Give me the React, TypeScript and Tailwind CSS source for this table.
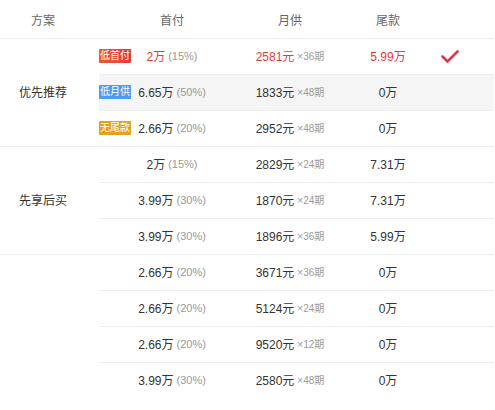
import { ReactNode } from 'react'

type Row = {
  tag?: { label: string; className: string }
  down: string
  pct: string
  monthly: string
  terms: string
  tail: string
  red?: boolean
  gray?: boolean
  checked?: boolean
}

type Group = { name: string; rows: Row[] }

const groups: Group[] = [
  {
    name: '优先推荐',
    rows: [
      {
        tag: { label: '低首付', className: 'bg-gradient-to-r from-[#ee5a2f] to-[#e23a3c]' },
        down: '2万',
        pct: '(15%)',
        monthly: '2581元',
        terms: '×36期',
        tail: '5.99万',
        red: true,
        checked: true,
      },
      {
        tag: { label: '低月供', className: 'bg-[#4a9df0]' },
        down: '6.65万',
        pct: '(50%)',
        monthly: '1833元',
        terms: '×48期',
        tail: '0万',
        gray: true,
      },
      {
        tag: { label: '无尾款', className: 'bg-[#e7a117]' },
        down: '2.66万',
        pct: '(20%)',
        monthly: '2952元',
        terms: '×48期',
        tail: '0万',
      },
    ],
  },
  {
    name: '先享后买',
    rows: [
      { down: '2万', pct: '(15%)', monthly: '2829元', terms: '×24期', tail: '7.31万' },
      { down: '3.99万', pct: '(30%)', monthly: '1870元', terms: '×24期', tail: '7.31万' },
      { down: '3.99万', pct: '(30%)', monthly: '1896元', terms: '×36期', tail: '5.99万' },
    ],
  },
  {
    name: '',
    rows: [
      { down: '2.66万', pct: '(20%)', monthly: '3671元', terms: '×36期', tail: '0万' },
      { down: '2.66万', pct: '(20%)', monthly: '5124元', terms: '×24期', tail: '0万' },
      { down: '2.66万', pct: '(20%)', monthly: '9520元', terms: '×12期', tail: '0万' },
      { down: '3.99万', pct: '(30%)', monthly: '2580元', terms: '×48期', tail: '0万' },
    ],
  },
]

function Cell({ w, children }: { w: string; children?: ReactNode }) {
  return <div className={`${w} flex items-center justify-center whitespace-nowrap`}>{children}</div>
}

function Check() {
  return (
    <svg width="18" height="14" viewBox="0 0 18 14" fill="none">
      <path d="M1.5 6.5 L6.5 11.5 L16.5 1.5" stroke="#e3344a" strokeWidth="2.6" strokeLinecap="round" strokeLinejoin="round" />
    </svg>
  )
}

export default function App() {
  return (
    <div
      className="w-[494px] bg-white text-[12px] text-[#333] leading-none"
      style={{ fontFamily: '"Liberation Sans", Arial, "Noto Sans CJK SC", sans-serif' }}
    >
      {/* Header */}
      <div className="h-[39px] flex border-b border-[#eeeeee] text-[#666]">
        <div className="w-[99px] pr-[13px] flex items-center justify-center pt-[3px]">方案</div>
        <Cell w="w-[146px] pt-[3px]">首付</Cell>
        <Cell w="w-[90px] pt-[3px]">月供</Cell>
        <Cell w="w-[106px] pt-[3px]">尾款</Cell>
        <div className="flex-1" />
      </div>

      {groups.map((g, gi) => (
        <div key={gi} className={`flex ${gi < groups.length - 1 ? 'border-b border-[#eeeeee]' : ''}`}>
          <div className="w-[99px] pr-[13px] flex items-center justify-center">{g.name}</div>
          <div className="flex-1 flex flex-col">
            {g.rows.map((r, ri) => {
              const last = ri === g.rows.length - 1
              return (
                <div
                  key={ri}
                  className={`relative flex ${last ? 'h-[35px]' : 'h-[36px] border-b border-[#eeeeee]'} ${r.gray ? 'bg-[#f5f5f5]' : ''}`}
                >
                  {r.tag && (
                    <span
                      className={`absolute left-0 top-[10px] h-[14px] w-[32px] flex items-center justify-center whitespace-nowrap text-[10px] text-white rounded-[1px] ${r.tag.className}`}
                    >
                      {r.tag.label}
                    </span>
                  )}
                  <Cell w="w-[146px]">
                    <span className={r.red ? 'text-[#e4393c]' : ''}>{r.down}</span>
                    <span className="ml-[3px] text-[11px] text-[#999]">{r.pct}</span>
                  </Cell>
                  <Cell w="w-[90px]">
                    <span className={r.red ? 'text-[#e4393c]' : ''}>{r.monthly}</span>
                    <span className="ml-[3px] text-[10px] text-[#999]">{r.terms}</span>
                  </Cell>
                  <Cell w="w-[106px]">
                    <span className={r.red ? 'text-[#e4393c]' : ''}>{r.tail}</span>
                  </Cell>
                  <div className="flex-1 flex items-center">{r.checked && <Check />}</div>
                </div>
              )
            })}
          </div>
        </div>
      ))}
    </div>
  )
}
